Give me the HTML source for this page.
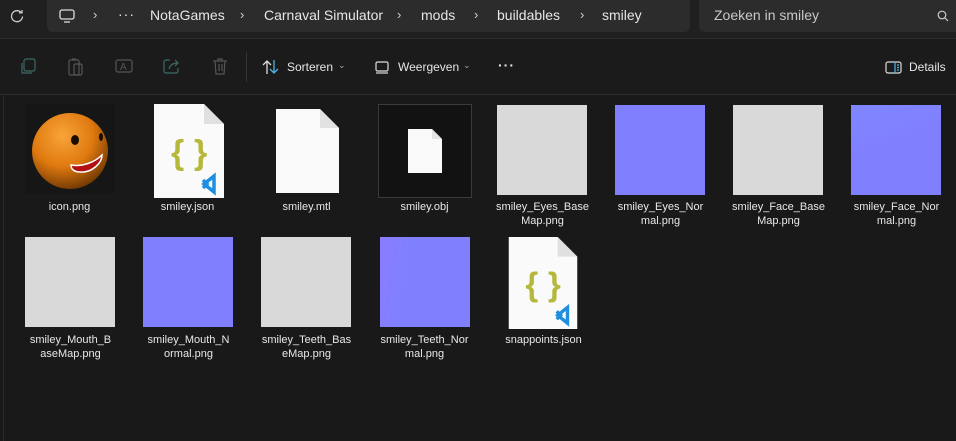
<!DOCTYPE html>
<html><head><meta charset="utf-8"><style>
*{margin:0;padding:0;box-sizing:border-box}
body{width:956px;height:441px;background:#191919;font-family:"Segoe UI","Liberation Sans",sans-serif;color:#e8e8e8;position:relative;overflow:hidden}
.top{position:absolute;left:0;top:0;width:956px;height:39px;background:#202020;border-bottom:1px solid #2c2c2c}
.addr{position:absolute;left:47px;top:0;width:643px;height:32px;background:#2c2c2c;border-radius:0 0 6px 6px}
.search{position:absolute;left:699px;top:0;width:257px;height:32px;background:#2c2c2c;border-radius:0 0 0 6px}
.t{position:absolute;font-size:14px;color:#e6e6e6;white-space:nowrap}
.chev{position:absolute;font-size:13px;color:#cfcfcf}
.tb{position:absolute;left:0;top:40px;width:956px;height:55px;background:#1b1b1b;border-bottom:1px solid #2e2e2e}
.lbl{position:absolute;font-size:11px;color:#e8e8e8;text-align:center;width:117px;line-height:14px}
.img{position:absolute}
.base{background:#d9d9d9}
.norm{background:#8080fe}
</style></head><body>
<div class="top">
<svg style="position:absolute;left:10px;top:9px" width="14" height="14" viewBox="0 0 14 14"><path d="M11.5 4A5.5 5.5 0 1 0 12.5 7.5" fill="none" stroke="#ccc" stroke-width="1.3"/><path d="M9 3.8h3V1" fill="none" stroke="#ccc" stroke-width="1.3"/></svg>
<div class="addr"></div>
<svg style="position:absolute;left:59px;top:9px" width="16" height="14" viewBox="0 0 16 14"><rect x="1" y="1" width="14" height="9" rx="2" fill="none" stroke="#ddd" stroke-width="1.3"/><path d="M5 13h6" stroke="#ddd" stroke-width="1.3"/></svg>
<span class="chev" style="left:93px;top:7px">›</span>
<span class="t" style="left:118px;top:6px;letter-spacing:1px">···</span>
<span class="t" style="left:150px;top:7px">NotaGames</span>
<span class="chev" style="left:240px;top:7px">›</span>
<span class="t" style="left:264px;top:7px">Carnaval Simulator</span>
<span class="chev" style="left:397px;top:7px">›</span>
<span class="t" style="left:421px;top:7px">mods</span>
<span class="chev" style="left:474px;top:7px">›</span>
<span class="t" style="left:497px;top:7px">buildables</span>
<span class="chev" style="left:580px;top:7px">›</span>
<span class="t" style="left:602px;top:7px">smiley</span>
<div class="search"></div>
<span class="t" style="left:714px;top:7px;color:#c8c8c8">Zoeken in smiley</span>
<svg style="position:absolute;left:937px;top:10px" width="12" height="12" viewBox="0 0 12 12"><circle cx="5" cy="5" r="3.8" fill="none" stroke="#ccc" stroke-width="1.2"/><path d="M8 8l3 3" stroke="#ccc" stroke-width="1.2"/></svg>
</div>
<div class="tb">
<svg style="position:absolute;left:20px;top:18px" width="16" height="18" viewBox="0 0 16 18" fill="none" stroke="#3a6a66" stroke-width="1.2"><rect x="4" y="1" width="11" height="12" rx="2"/><path d="M2 5v10h10"/></svg>
<svg style="position:absolute;left:68px;top:17px" width="16" height="20" viewBox="0 0 16 20" fill="none" stroke="#555" stroke-width="1.2"><rect x="1" y="3" width="10" height="15" rx="1.5"/><rect x="6" y="7" width="8" height="11" rx="1.5"/><path d="M4 2h4"/></svg>
<svg style="position:absolute;left:115px;top:18px" width="18" height="16" viewBox="0 0 18 16" fill="none" stroke="#555" stroke-width="1.2"><rect x="1" y="2" width="16" height="12" rx="2"/><text x="5" y="12" font-size="10" fill="#555" stroke="none" font-family="Liberation Sans">A</text></svg>
<svg style="position:absolute;left:163px;top:18px" width="18" height="16" viewBox="0 0 18 16" fill="none" stroke="#3a6a66" stroke-width="1.2"><path d="M7 2H3a2 2 0 0 0-2 2v9a2 2 0 0 0 2 2h10a2 2 0 0 0 2-2v-3"/><path d="M6 11c1-4 4-6 9-6M12 2l3 3-3 3"/></svg>
<svg style="position:absolute;left:212px;top:17px" width="16" height="18" viewBox="0 0 16 18" fill="none" stroke="#555" stroke-width="1.2"><path d="M1 4h14M6 4V2h4v2M3 4l1 13h8l1-13M7 7v7M10 7v7"/></svg>
<div style="position:absolute;left:246px;top:12px;width:1px;height:30px;background:#333"></div>
<svg style="position:absolute;left:262px;top:19px" width="18" height="16" viewBox="0 0 18 16" fill="none" stroke-width="1.3"><path d="M5 15V2M1 6l4-4 4 4" stroke="#ddd"/><path d="M12 1v13M8 10l4 4 4-4" stroke="#4fb3e8"/></svg>
<span class="t" style="left:287px;top:20px;font-size:12px">Sorteren</span>
<span class="t" style="left:338px;top:20px;font-size:9px;color:#aaa">⌄</span>
<svg style="position:absolute;left:375px;top:21px" width="14" height="13" viewBox="0 0 14 13" fill="none" stroke="#ddd" stroke-width="1.2"><rect x="1" y="1" width="12" height="9" rx="1.5"/><path d="M1 12h12"/></svg>
<span class="t" style="left:398px;top:20px;font-size:12px">Weergeven</span>
<span class="t" style="left:463px;top:20px;font-size:9px;color:#aaa">⌄</span>
<span class="t" style="left:498px;top:17px;font-size:14px;letter-spacing:1px;font-weight:bold">···</span>
<svg style="position:absolute;left:885px;top:21px" width="17" height="13" viewBox="0 0 17 13" fill="none" stroke-width="1.2"><rect x="1" y="1" width="15" height="11" rx="2" stroke="#ddd"/><path d="M10 1v11M12 4h2M12 6.5h2M12 9h2" stroke="#4fb3e8"/></svg>
<span class="t" style="left:909px;top:20px;font-size:12px">Details</span>
</div>
<div style="position:absolute;left:3px;top:96px;width:1px;height:345px;background:#2a2a2a"></div>

<svg class="img" style="left:25px;top:104px" width="90" height="90" viewBox="0 0 90 90">
<defs><radialGradient id="g" cx="0.4" cy="0.3" r="0.8"><stop offset="0" stop-color="#f8a43a"/><stop offset="0.5" stop-color="#e07a10"/><stop offset="1" stop-color="#5a2a00"/></radialGradient></defs>
<rect width="90" height="90" fill="#161616"/>
<circle cx="45" cy="47" r="38" fill="url(#g)"/>
<ellipse cx="50" cy="36" rx="4" ry="5" fill="#1a0d00"/><ellipse cx="76" cy="33" rx="2" ry="4" fill="#1a0d00"/>
<path d="M46 61c12 2 24-3 31-10c0 8-10 18-22 17c-6 0-9-3-9-7z" fill="#b01010" stroke="#fff" stroke-width="1.5"/>
</svg>
<div class="lbl" style="left:11px;top:200px">icon.png</div>

<svg class="img" style="left:154px;top:104px" width="70" height="94" viewBox="0 0 70 94">
<path d="M0 0h50l20 20v74H0z" fill="#fafafa"/><path d="M50 0v20h20" fill="#e0e0e0"/>
<text x="17" y="60" font-size="34" fill="#b5b83a" font-family="Liberation Sans" font-weight="bold">{</text>
<text x="40" y="60" font-size="34" fill="#b5b83a" font-family="Liberation Sans" font-weight="bold">}</text>
<path d="M50 80l10-8v16zM49 76l4 4-4 4" fill="none" stroke="#1e8fe0" stroke-width="3.5"/>
</svg>
<div class="lbl" style="left:129px;top:200px">smiley.json</div>

<svg class="img" style="left:276px;top:109px" width="63" height="84" viewBox="0 0 63 84"><path d="M0 0h44l19 19v65H0z" fill="#f9f9f9"/><path d="M44 0v19h19" fill="#e2e2e2"/></svg>
<div class="lbl" style="left:248px;top:200px">smiley.mtl</div>

<div class="img" style="left:378px;top:104px;width:94px;height:94px;background:#121212;border:1px solid #3a3a3a"></div>
<svg class="img" style="left:408px;top:129px" width="34" height="44" viewBox="0 0 34 44"><path d="M0 0h24l10 10v34H0z" fill="#f9f9f9"/><path d="M24 0v10h10" fill="#e2e2e2"/></svg>
<div class="lbl" style="left:366px;top:200px">smiley.obj</div>

<div class="img base" style="left:497px;top:105px;width:90px;height:90px"></div>
<div class="lbl" style="left:484px;top:200px">smiley_Eyes_Base<br>Map.png</div>
<div class="img norm" style="left:615px;top:105px;width:90px;height:90px"></div>
<div class="lbl" style="left:602px;top:200px">smiley_Eyes_Nor<br>mal.png</div>
<div class="img base" style="left:733px;top:105px;width:90px;height:90px"></div>
<div class="lbl" style="left:720px;top:200px">smiley_Face_Base<br>Map.png</div>
<div class="img norm" style="left:851px;top:105px;width:90px;height:90px;background:linear-gradient(160deg,#7f86ff,#8080fe 40%)"></div>
<div class="lbl" style="left:838px;top:200px">smiley_Face_Nor<br>mal.png</div>

<div class="img base" style="left:25px;top:237px;width:90px;height:90px"></div>
<div class="lbl" style="left:12px;top:333px">smiley_Mouth_B<br>aseMap.png</div>
<div class="img norm" style="left:143px;top:237px;width:90px;height:90px"></div>
<div class="lbl" style="left:130px;top:333px">smiley_Mouth_N<br>ormal.png</div>
<div class="img base" style="left:261px;top:237px;width:90px;height:90px"></div>
<div class="lbl" style="left:248px;top:333px">smiley_Teeth_Bas<br>eMap.png</div>
<div class="img norm" style="left:380px;top:237px;width:90px;height:90px;background:linear-gradient(100deg,#8a7cff,#8080fe 30%)"></div>
<div class="lbl" style="left:366px;top:333px">smiley_Teeth_Nor<br>mal.png</div>

<svg class="img" style="left:508px;top:237px" width="70" height="92" viewBox="0 0 70 94">
<path d="M0 0h50l20 20v74H0z" fill="#fafafa"/><path d="M50 0v20h20" fill="#e0e0e0"/>
<text x="17" y="60" font-size="34" fill="#b5b83a" font-family="Liberation Sans" font-weight="bold">{</text>
<text x="40" y="60" font-size="34" fill="#b5b83a" font-family="Liberation Sans" font-weight="bold">}</text>
<path d="M50 80l10-8v16zM49 76l4 4-4 4" fill="none" stroke="#1e8fe0" stroke-width="3.5"/>
</svg>
<div class="lbl" style="left:485px;top:333px">snappoints.json</div>
</body></html>
